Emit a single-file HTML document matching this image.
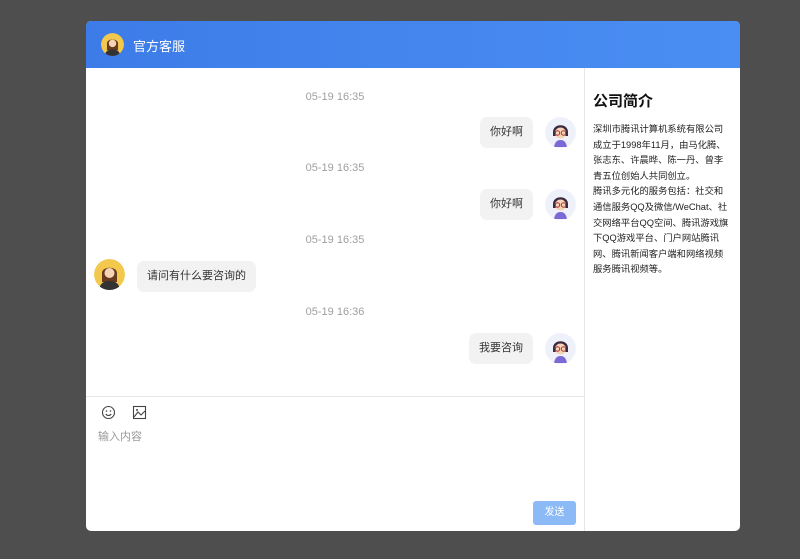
<!DOCTYPE html>
<html><head><meta charset="utf-8"><style>
*{margin:0;padding:0;box-sizing:border-box}
body{width:800px;height:559px;background:#4d4e4d;font-family:"Liberation Sans","Noto Sans CJK SC",sans-serif;position:relative;overflow:hidden}
.panel{position:absolute;left:86px;top:21px;width:654px;height:510px;background:#fff;border-radius:5px;overflow:hidden}
.hd{height:47px;background:linear-gradient(90deg,#3d7ce8,#4a8ef3);position:relative}
.hd .t{position:absolute;left:47px;top:15px;color:#fff;font-size:13px}
.av{position:absolute;width:31px;height:31px;border-radius:50%;overflow:hidden}
.chat{position:absolute;left:0;top:47px;width:499px;height:328px;border-right:1px solid #e6e6e6}
.side{position:absolute;left:499px;top:47px;width:155px;height:463px}
.ts{position:absolute;width:498px;text-align:center;font-size:11px;color:#a0a0a0}
.b{position:absolute;background:#f2f2f2;border-radius:7px;font-size:11px;color:#333;height:31px;line-height:31px;padding:0 10px}
.inp{position:absolute;left:0;top:375px;width:499px;height:135px;border-top:1px solid #e6e6e6;border-right:1px solid #e6e6e6}
.side h2{position:absolute;left:8px;top:22px;font-size:15px;font-weight:bold;color:#111}
.side p{position:absolute;left:8px;top:54px;font-size:9.3px;line-height:15.6px;color:#222;white-space:nowrap}
.btn{position:absolute;left:447px;top:104px;width:43px;height:24px;background:#8cbaf7;color:#fff;font-size:10px;text-align:center;line-height:24px;border-radius:3px}
</style></head><body>
<svg width="0" height="0" style="position:absolute"><defs>
<g id="girl"><circle cx="15.5" cy="15.5" r="15.5" fill="#f2c94c"/><path d="M8 14c0-7 15-7 15 0v9H8z" fill="#6a3a1e"/><circle cx="15.5" cy="14" r="5" fill="#f6d3b6"/><path d="M5 31c1-7 5-9 10.5-9s9.5 2 10.5 9z" fill="#333"/></g>
<g id="boy"><circle cx="15.5" cy="15.5" r="15.5" fill="#eef1fa"/><path d="M8 15c0-9 15-9 15 0v4H8z" fill="#3b2b3e"/><circle cx="15.5" cy="16" r="5.5" fill="#f6d3b6"/><circle cx="12.5" cy="16" r="2.2" fill="none" stroke="#a33" stroke-width="1"/><circle cx="18.5" cy="16" r="2.2" fill="none" stroke="#a33" stroke-width="1"/><path d="M9 30c1-5 3-7 6.5-7s5.5 2 6.5 7z" fill="#7b6ad6"/></g>
</defs></svg>
<div class="panel">
<div class="hd"><svg class="av" style="left:15px;top:12px;width:23px;height:23px" viewBox="0 0 31 31"><use href="#girl"/></svg><span class="t">官方客服</span></div>
<div class="chat">
<div class="ts" style="top:23px">05-19 16:35</div>
<div class="b" style="right:51px;top:49px">你好啊</div>
<svg class="av" style="left:459px;top:49px" viewBox="0 0 31 31"><use href="#boy"/></svg>
<div class="ts" style="top:94px">05-19 16:35</div>
<div class="b" style="right:51px;top:121px">你好啊</div>
<svg class="av" style="left:459px;top:121px" viewBox="0 0 31 31"><use href="#boy"/></svg>
<div class="ts" style="top:166px">05-19 16:35</div>
<svg class="av" style="left:8px;top:191px" viewBox="0 0 31 31"><use href="#girl"/></svg>
<div class="b" style="left:51px;top:193px">请问有什么要咨询的</div>
<div class="ts" style="top:238px">05-19 16:36</div>
<div class="b" style="right:51px;top:265px">我要咨询</div>
<svg class="av" style="left:459px;top:265px" viewBox="0 0 31 31"><use href="#boy"/></svg>
</div>
<div class="inp">
<svg style="position:absolute;left:15px;top:8px" width="15" height="15" viewBox="0 0 15 15"><circle cx="7.5" cy="7.5" r="6" fill="none" stroke="#444" stroke-width="1.1"/><circle cx="5.5" cy="6" r=".8" fill="#444"/><circle cx="9.5" cy="6" r=".8" fill="#444"/><path d="M4.8 9c1.5 2 3.9 2 5.4 0" fill="none" stroke="#444" stroke-width="1.1"/></svg>
<svg style="position:absolute;left:46px;top:8px" width="15" height="15" viewBox="0 0 15 15"><rect x="1.5" y="1.5" width="12" height="12" fill="none" stroke="#444" stroke-width="1.1"/><path d="M2 12l4-5 3 3 4-4" fill="none" stroke="#444" stroke-width="1.1"/><circle cx="5" cy="5" r="1" fill="#444"/></svg>
<div style="position:absolute;left:12px;top:31px;font-size:11px;color:#999">输入内容</div>
<div class="btn">发送</div>
</div>
<div class="side"><h2>公司简介</h2><p>深圳市腾讯计算机系统有限公司<br>成立于1998年11月，由马化腾、<br>张志东、许晨晔、陈一丹、曾李<br>青五位创始人共同创立。<br>腾讯多元化的服务包括：社交和<br>通信服务QQ及微信/WeChat、社<br>交网络平台QQ空间、腾讯游戏旗<br>下QQ游戏平台、门户网站腾讯<br>网、腾讯新闻客户端和网络视频<br>服务腾讯视频等。</p></div>
</div>
</body></html>
